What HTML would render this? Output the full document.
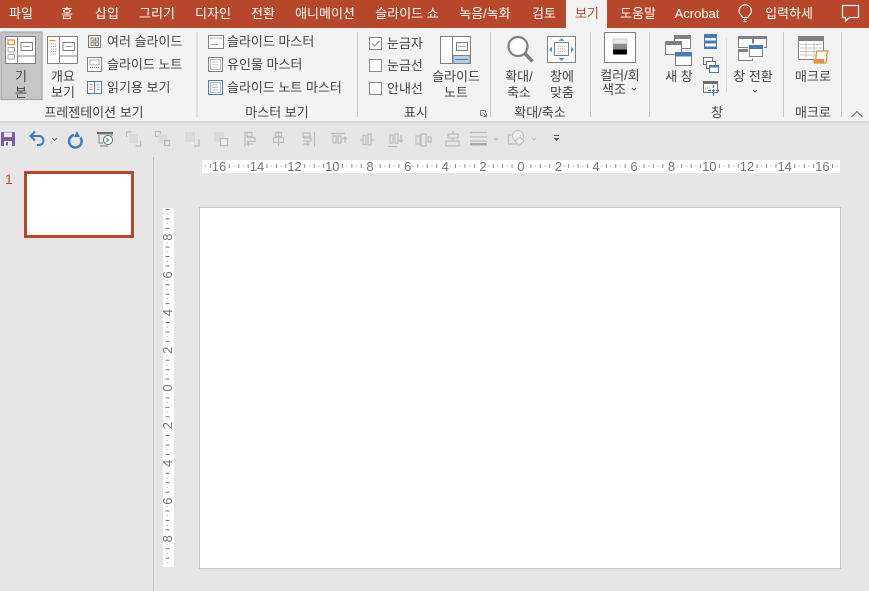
<!DOCTYPE html>
<html lang="ko"><head><meta charset="utf-8"><title>PowerPoint</title>
<style>
html,body{margin:0;padding:0;width:869px;height:591px;overflow:hidden;background:#e6e6e6}
svg{position:absolute;left:0;top:0;display:block}
text{font-family:"Liberation Sans","Noto Sans CJK KR",sans-serif;font-size:13px;fill:#444}
.c{text-anchor:middle}
.t{fill:#fff}
.r{font-family:"Liberation Sans",sans-serif;font-size:13px;fill:#777;text-anchor:middle}
.g{fill:none;stroke:#808080;stroke-width:1.2}
.d{fill:none;stroke:#bdbbbd;stroke-width:1.2}
</style></head><body>
<svg width="869" height="591" viewBox="0 0 869 591" xmlns="http://www.w3.org/2000/svg">
<defs>
<pattern id="hp" x="521" y="160" width="18.85" height="13" patternUnits="userSpaceOnUse">
<rect x="0" y="4" width="1" height="4" fill="#8a8a8a"/><rect x="4.7" y="5.5" width="1" height="1.500" fill="#b0b0b0"/><rect x="9.4" y="4" width="1" height="4" fill="#8a8a8a"/><rect x="14.1" y="5.500" width="1" height="1.500" fill="#b0b0b0"/>
</pattern>
<pattern id="vp" x="163" y="388" width="11" height="18.85" patternUnits="userSpaceOnUse">
<rect x="2.500" y="0" width="4" height="1" fill="#777"/><rect x="3.500" y="4.7" width="1.500" height="1" fill="#b0b0b0"/><rect x="2.500" y="9.4" width="4" height="1" fill="#777"/><rect x="3.500" y="14.1" width="1.500" height="1" fill="#b0b0b0"/>
</pattern>
</defs>

<!-- title/tabs -->
<rect width="869" height="28" fill="#b7472a"/>
<rect x="0" y="28" width="869" height="93" fill="#f3f3f3"/>
<rect x="0" y="121" width="869" height="2" fill="#d4d4d4"/>
<rect x="566" y="0" width="41" height="28" fill="#f3f3f3"/>
<g class="tabs">
<text class="t c" x="21" y="18">파일</text>
<text class="t c" x="67" y="18">홈</text>
<text class="t c" x="107" y="18">삽입</text>
<text class="t c" x="157" y="18">그리기</text>
<text class="t c" x="213" y="18">디자인</text>
<text class="t c" x="263" y="18">전환</text>
<text class="t c" x="325" y="18">애니메이션</text>
<text class="t c" x="407" y="18">슬라이드 쇼</text>
<text class="t c" x="485" y="18">녹음/녹화</text>
<text class="t c" x="544" y="18">검토</text>
<text class="c" x="587" y="18" style="fill:#b7472a">보기</text>
<text class="t c" x="638" y="18">도움말</text>
<text class="t c" x="697" y="18">Acrobat</text>
<text class="t c" x="789" y="18">입력하세</text>
</g>
<!-- bulb -->
<path d="M742.500 17.500c-1-2.500-3.500-3.500-3.500-6.500a6.200 6.200 0 0 1 12.400 0c0 3-2.500 4-3.500 6.500zM743 19.500h4M743.500 21.500h3" fill="none" stroke="#fff" stroke-width="1.100"/>
<!-- comment -->
<path d="M842.500 5.500h16v12h-9l-4 3.500v-3.500h-3z" fill="none" stroke="#fff" stroke-width="1.200"/>

<!-- group separators -->
<g fill="#c8c8c8">
<rect x="196.500" y="32" width="1" height="85"/><rect x="357" y="32" width="1" height="85"/><rect x="490" y="32" width="1" height="85"/>
<rect x="590" y="32" width="1" height="85"/><rect x="649" y="32" width="1" height="85"/><rect x="783" y="32" width="1" height="85"/><rect x="841" y="32" width="1" height="85"/>
<rect x="726" y="38" width="1" height="54" fill="#dadada"/>
</g>

<!-- normal view -->
<rect x="1" y="32" width="41" height="67.500" fill="#c6c6c6" stroke="#a8a8a8" stroke-width="1.200"/>
<rect x="5.500" y="36.500" width="30" height="27" fill="#fff" stroke="#808080"/>
<path d="M17.500 37v26M18 56h17" stroke="#808080" fill="none"/>
<rect x="8" y="40" width="6.500" height="4.500" fill="none" stroke="#e58a2e" stroke-width="1.200"/>
<rect x="8" y="47.500" width="6.500" height="4.500" fill="none" stroke="#a8a8a8"/>
<rect x="8" y="54.500" width="6.500" height="4.500" fill="none" stroke="#a8a8a8"/>
<rect x="21" y="42.500" width="11.500" height="8" fill="none" stroke="#808080"/>
<path d="M23 46.500h7.500" stroke="#aaa"/>
<text class="c" x="21" y="81">기</text><text class="c" x="21" y="97">본</text>

<!-- outline -->
<rect x="47.500" y="36.500" width="30" height="27" fill="#fff" stroke="#808080"/>
<path d="M59.500 37v26M60 56h17" stroke="#808080" fill="none"/>
<path d="M49.500 40.500h6" stroke="#e58a2e" stroke-width="1.200"/>
<path d="M51 44h6M51 46.500h6M51 49h6M51 51.500h6M51 54h6" stroke="#999" stroke-dasharray="1 1"/>
<rect x="63" y="42.500" width="11.500" height="8" fill="none" stroke="#808080"/>
<path d="M65 46.500h7.500" stroke="#aaa"/>
<text class="c" x="63" y="81">개요</text><text class="c" x="63" y="97">보기</text>

<!-- small views -->
<rect x="88.500" y="35.500" width="12" height="12" fill="#fff" stroke="#777"/>
<path d="M91 38h3v3h-3zM95.500 38h3v3h-3zM91 42.500h3v3h-3zM95.500 42.500h3v3h-3z" fill="none" stroke="#8a8070"/>
<rect x="87.500" y="57.500" width="14" height="14" fill="#fff" stroke="#808080"/>
<rect x="90" y="60" width="9" height="5" fill="none" stroke="#aaa"/>
<path d="M90 67.500h9" stroke="#4a7ab5" stroke-dasharray="1 1"/>
<rect x="87.500" y="81.500" width="14" height="12" fill="#fff" stroke="#4a7ab5"/>
<path d="M94.500 82v11" stroke="#808080"/><path d="M89.500 84.500h3M89.500 87h3M89.500 89.500h3M96.500 84.500h3M96.500 87h3M96.500 89.500h3" stroke="#aaa"/>
<text x="107" y="46">여러 슬라이드</text>
<text x="107" y="69">슬라이드 노트</text>
<text x="107" y="92">읽기용 보기</text>
<text class="c" x="94" y="117">프레젠테이션 보기</text>

<!-- master -->
<rect x="208.500" y="35.500" width="15" height="13" fill="#fff" stroke="#808080"/>
<path d="M210.500 38h11" stroke="#777" stroke-dasharray="1 1"/><path d="M211 44.500h7" stroke="#7aa5d2"/>
<rect x="208.500" y="57.500" width="14" height="14" fill="#fff" stroke="#808080"/>
<rect x="210.500" y="59.500" width="10" height="10" fill="none" stroke="#777" stroke-dasharray="1 1"/><path d="M212.500 62h6M212.500 64.500h6M212.500 67h6" stroke="#999" stroke-dasharray="1 1"/>
<rect x="208.500" y="80.500" width="14" height="14" fill="#fff" stroke="#4a7ab5"/>
<rect x="210.500" y="82.500" width="10" height="10" fill="none" stroke="#4a7ab5" stroke-dasharray="1 1"/><path d="M212.500 85h6M212.500 87.500h6M212.500 90h6" stroke="#777" stroke-dasharray="1 1"/>
<text x="227" y="46">슬라이드 마스터</text>
<text x="227" y="69">유인물 마스터</text>
<text x="227" y="92">슬라이드 노트 마스터</text>
<text class="c" x="277" y="117">마스터 보기</text>

<!-- show -->
<rect x="369.500" y="37.500" width="12" height="12" fill="#fff" stroke="#888"/>
<path d="M372 43.500l2.500 2.500 5-5" fill="none" stroke="#888"/>
<rect x="369.500" y="59.500" width="12" height="12" fill="#fff" stroke="#888"/>
<rect x="369.500" y="82.500" width="12" height="12" fill="#fff" stroke="#888"/>
<text x="387" y="48">눈금자</text><text x="387" y="70">눈금선</text><text x="387" y="93">안내선</text>
<rect x="440.500" y="36.500" width="30" height="27" fill="#fff" stroke="#808080"/>
<path d="M452.500 37v26" stroke="#808080"/>
<rect x="453" y="55.500" width="17" height="8" fill="#b9cfe4" stroke="#808080"/>
<path d="M455 59.500h13" stroke="#4a7ab5"/>
<rect x="456.500" y="42.500" width="11" height="8" fill="none" stroke="#808080"/><path d="M458.500 46.500h7" stroke="#aaa"/>
<text class="c" x="456" y="81">슬라이드</text><text class="c" x="456" y="97">노트</text>
<text class="c" x="416" y="117">표시</text>
<path d="M480.500 110.500h5M480.500 110.500v5M480.500 115.500h2M485.500 110.500v2M482.500 112.500l4 4M486.500 113.500v3h-3" fill="none" stroke="#777"/>

<!-- zoom -->
<circle cx="518" cy="46.500" r="9.500" fill="#fff" stroke="#808080" stroke-width="2.200"/>
<path d="M525 53.500l7.500 8" stroke="#808080" stroke-width="3.500"/>
<text class="c" x="519" y="81">확대/</text><text class="c" x="519" y="97">축소</text>
<rect x="547.500" y="36.500" width="28" height="26" fill="#fff" stroke="#808080"/>
<rect x="554.500" y="42.500" width="14" height="13" fill="none" stroke="#808080"/>
<path d="M558 46.500h7M558 49h7M558 51.500h7" stroke="#aaa" stroke-dasharray="1 1"/>
<path d="M561.500 38l3 3h-6zM561.500 61l3-3h-6zM549 49.500l3-3v6zM574 49.500l-3-3v6z" fill="#5b93c9"/>
<text class="c" x="562" y="81">창에</text><text class="c" x="562" y="97">맞춤</text>
<text class="c" x="540" y="117">확대/축소</text>

<!-- color -->
<rect x="604.500" y="32.500" width="31" height="30" fill="#fff" stroke="#808080"/>
<rect x="613" y="39" width="14" height="5" fill="#e8e8e8" stroke="#aaa" stroke-width=".5"/>
<rect x="613" y="44" width="14" height="5.500" fill="#8c8c8c"/>
<rect x="613" y="49.500" width="14" height="5" fill="#000"/>
<text class="c" x="620" y="80">컬러/회</text><text class="c" x="614" y="94">색조</text>
<path d="M632 88l2 2 2-2" fill="none" stroke="#555"/>

<!-- window -->
<rect x="674.500" y="35.500" width="16" height="13" fill="#fff" stroke="#808080"/><rect x="674" y="35" width="17" height="4" fill="#808080"/>
<rect x="665.500" y="41.500" width="16" height="13" fill="#fff" stroke="#808080"/><rect x="665" y="41" width="17" height="4" fill="#808080"/>
<rect x="675.500" y="52.500" width="16" height="13" fill="#fff" stroke="#808080"/><rect x="675" y="52" width="17" height="4.500" fill="#4a7ab5"/>
<text class="c" x="679" y="81">새 창</text>
<rect x="704.500" y="34.500" width="12" height="14" fill="#fff" stroke="#4a7ab5"/><rect x="704" y="34" width="13" height="4" fill="#4a7ab5"/><rect x="704" y="40.500" width="13" height="3" fill="#4a7ab5"/><rect x="704" y="46.500" width="13" height="2.500" fill="#4a7ab5"/>
<rect x="703.500" y="57.500" width="9" height="7" fill="#fff" stroke="#707070"/>
<rect x="706.500" y="61.500" width="9" height="7" fill="#fff" stroke="#707070"/>
<rect x="709.500" y="65.500" width="9" height="7" fill="#fff" stroke="#4a7ab5"/><rect x="709" y="65" width="10" height="2.500" fill="#4a7ab5"/>
<rect x="703.500" y="81.500" width="14" height="11" fill="#fff" stroke="#707070"/><rect x="703" y="81" width="15" height="3" fill="#707070"/>
<path d="M705 88h5" stroke="#999" stroke-dasharray="1 1"/>
<path d="M713.500 85v11M708 90.500h11" stroke="#4a7ab5" stroke-width="1.200" stroke-dasharray="3 1"/>

<rect x="738.500" y="36.500" width="14" height="11" fill="#fff" stroke="#808080"/><rect x="738" y="36" width="15" height="3" fill="#808080"/>
<rect x="753.500" y="36.500" width="13" height="11" fill="#fff" stroke="#808080"/><rect x="753" y="36" width="14" height="3" fill="#808080"/>
<rect x="738.500" y="49.500" width="14" height="11" fill="#fff" stroke="#808080"/><rect x="738" y="49" width="15" height="3" fill="#808080"/>
<rect x="748" y="43.500" width="16" height="15" fill="#fff"/>
<rect x="749.500" y="45.500" width="13" height="11" fill="#fff" stroke="#808080"/><rect x="749" y="45" width="14" height="4" fill="#4a7ab5"/>
<text class="c" x="753" y="81">창 전환</text>
<path d="M753 90l2 2 2-2" fill="none" stroke="#555"/>
<text class="c" x="717" y="117">창</text>

<!-- macro -->
<rect x="798.500" y="37.500" width="25" height="22" fill="#fff" stroke="#808080"/>
<rect x="798" y="36" width="26" height="5" fill="#808080"/>
<path d="M800 44.500h22M800 48h22M800 51.500h22M800 55h22M806 42v16M814 42v16" stroke="#c8c8c8"/>
<path d="M817 51h11c-2 2-1 10-2 12h-11c1-3 1-9 2-12z" fill="#fff" stroke="#e8903a" stroke-width="1.300"/>
<path d="M815 59h-1c-1 2-1 4 1 4.500h10c-1-1-1-3-1-4.500z" fill="#e8903a"/>
<text class="c" x="813" y="81">매크로</text><text class="c" x="813" y="117">매크로</text>
<path d="M851.500 117l5.500-5.500 5.500 5.500" fill="none" stroke="#666"/>

<!-- QAT -->
<rect x="1" y="132" width="14" height="14" rx="1" fill="#7a5cab"/><rect x="4" y="132.500" width="8" height="4.500" fill="#f1eef6"/><rect x="4" y="141" width="8" height="5" fill="#f1eef6"/><rect x="6" y="142" width="2" height="3.500" fill="#7a5cab"/>
<path d="M31 136h8c6 0 6 9 0 9h-2" fill="none" stroke="#3f7cbf" stroke-width="2"/><path d="M35 131.500l-4.500 4.500 4.500 4.500" fill="none" stroke="#3f7cbf" stroke-width="2"/>
<path d="M52 138l2.500 2.500 2.500-2.500" fill="none" stroke="#666"/>
<path d="M73 134a6.300 6.300 0 1 0 6.500 2.500" fill="none" stroke="#3f7cbf" stroke-width="2.500" transform="translate(1,1)"/><path d="M77 131l3 6-6 0z" fill="#3f7cbf"/>
<path d="M97 133h16" stroke="#666" stroke-width="2"/><path d="M99 134h13v2M99 134v9h4" fill="none" stroke="#888"/>
<circle cx="108" cy="140" r="4.500" fill="#fff" stroke="#666"/><path d="M106.500 137.500l3.500 2.500-3.500 2.500z" fill="#66a892"/><path d="M100 146h8" stroke="#777"/>

<g class="d">
<path d="M131.500 132h-5v5M135.500 146h5v-5"/><rect x="129" y="134" width="9" height="9" fill="#dcdadc" stroke="none"/>
<rect x="155.500" y="131.500" width="5" height="5"/><rect x="158" y="134" width="9" height="9" fill="#dcdadc" stroke="none"/><rect x="164.500" y="140.500" width="5" height="5"/>
<rect x="185" y="132" width="10" height="10" fill="#dcdadc" stroke="none"/><path d="M194 146h5v-7"/><path d="M190 142h4v4" fill="#f0eff0" stroke="none"/>
<rect x="214" y="132" width="10" height="10" fill="#dcdadc" stroke="none"/><rect x="220.500" y="138.500" width="7" height="7" fill="#f0eff0"/>
<path d="M245 131.500v15M247 132.500h5v4h-5zM247 137.500h8v4h-8M253 144h-6m2-2l-2 2 2 2"/>
<path d="M278.500 131v15M275.500 132.500h6v4h-6zM273.500 137.500h10v5h-10z"/>
<path d="M303 133h7v4h-7zM303 138h8v3h-8M303 144h6m-2-2l2 2-2 2M314.500 131.500v15"/>
<path d="M331 133.500h14M333 136h3v7h-3zM338 136h3v7h-3zM345 143v-6m-2 2l2-2 2 2"/>
<path d="M360 140h3M363 135.500h3v9h-3zM368 134h3v11h-3zM371 140h3"/>
<path d="M388 146.500h9M390 135h3v8h-3zM395 134h3v9h-3zM401 135v7m-2-2l2 2 2-2"/>
<path d="M416 136h4v8h-4zM421 134h5v12h-5zM428 137h3v5h-3z"/>
<path d="M453 131v3M448 134h10v4h-10zM453 138v3M446 141h13v5h-13z"/>
</g>
<path d="M470 132.500h17M470 137h17M470 141h17" stroke="#bbb" stroke-width="1.200"/><rect x="470" y="143" width="17" height="2.500" fill="#aaa"/>
<path d="M494 138l2 2 2-2" fill="none" stroke="#bbb"/>
<path d="M508.500 135h9v9h-9z" class="d"/><circle cx="518" cy="136" r="5.500" fill="#f0eff0" stroke="#c4c2c4"/><path d="M515 141l5-4 4 4-5 4.500z" fill="#f0eff0" stroke="#bbb"/>
<path d="M532 138l2 2 2-2" fill="none" stroke="#bbb"/>
<path d="M554 135.500h5" stroke="#555"/><path d="M553.500 138h6l-3 3z" fill="#555"/>

<!-- sidebar sep -->
<rect x="153" y="157" width="1" height="434" fill="#c4c4c4"/>
<text x="5" y="184" style="font-size:14px;fill:#c8462a;font-family:'Liberation Sans',sans-serif">1</text>
<rect x="25.500" y="172.500" width="107" height="64" fill="#fff" stroke="#b7472a" stroke-width="3"/>

<!-- h ruler -->
<rect x="202" y="160" width="638" height="13" fill="#fff"/>
<rect x="202" y="160" width="638" height="13" fill="url(#hp)"/>
<g id="hn" fill="#fff">
<rect x="212" y="160" width="15" height="13"/><rect x="250" y="160" width="15" height="13"/><rect x="287" y="160" width="15" height="13"/><rect x="325" y="160" width="15" height="13"/><rect x="365" y="160" width="9" height="13"/><rect x="403" y="160" width="9" height="13"/><rect x="440" y="160" width="9" height="13"/><rect x="478" y="160" width="9" height="13"/><rect x="516" y="160" width="9" height="13"/><rect x="554" y="160" width="9" height="13"/><rect x="591" y="160" width="9" height="13"/><rect x="629" y="160" width="9" height="13"/><rect x="667" y="160" width="9" height="13"/><rect x="701" y="160" width="15" height="13"/><rect x="739" y="160" width="15" height="13"/><rect x="777" y="160" width="15" height="13"/><rect x="815" y="160" width="15" height="13"/>
</g>
<g>
<text class="r" x="219" y="171">16</text><text class="r" x="257" y="171">14</text><text class="r" x="294.500" y="171">12</text><text class="r" x="332.300" y="171">10</text><text class="r" x="370" y="171">8</text><text class="r" x="407.700" y="171">6</text><text class="r" x="445.400" y="171">4</text><text class="r" x="483" y="171">2</text><text class="r" x="521" y="171">0</text><text class="r" x="558.500" y="171">2</text><text class="r" x="596" y="171">4</text><text class="r" x="634" y="171">6</text><text class="r" x="671.500" y="171">8</text><text class="r" x="709.300" y="171">10</text><text class="r" x="747" y="171">12</text><text class="r" x="784.700" y="171">14</text><text class="r" x="822.400" y="171">16</text>
</g>

<!-- v ruler -->
<rect x="163" y="208" width="11" height="359" fill="#fff"/>
<rect x="163" y="208" width="11" height="359" fill="url(#vp)"/>
<g fill="#fff">
<rect x="163" y="232" width="11" height="10"/><rect x="163" y="270" width="11" height="10"/><rect x="163" y="308" width="11" height="10"/><rect x="163" y="345" width="11" height="10"/><rect x="163" y="383" width="11" height="10"/><rect x="163" y="421" width="11" height="10"/><rect x="163" y="459" width="11" height="10"/><rect x="163" y="496" width="11" height="10"/><rect x="163" y="534" width="11" height="10"/>
</g>
<g>
<text class="r" transform="translate(172,237.200) rotate(-90)">8</text>
<text class="r" transform="translate(172,274.900) rotate(-90)">6</text>
<text class="r" transform="translate(172,312.600) rotate(-90)">4</text>
<text class="r" transform="translate(172,350.300) rotate(-90)">2</text>
<text class="r" transform="translate(172,388) rotate(-90)">0</text>
<text class="r" transform="translate(172,425.700) rotate(-90)">2</text>
<text class="r" transform="translate(172,463.400) rotate(-90)">4</text>
<text class="r" transform="translate(172,501.100) rotate(-90)">6</text>
<text class="r" transform="translate(172,538.800) rotate(-90)">8</text>
</g>

<!-- slide -->
<rect x="199.500" y="207.500" width="641" height="361" fill="#fff" stroke="#c6c6c6"/>
</svg>
</body></html>
